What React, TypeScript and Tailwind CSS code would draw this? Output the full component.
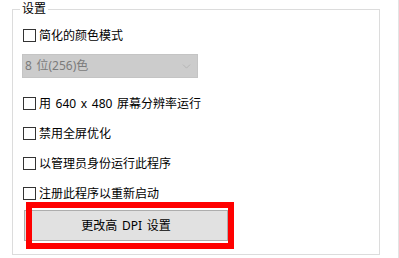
import { ChevronDown } from 'lucide-react'

const FONT = '[font-family:"Noto_Sans","Noto_Sans_CJK_SC",sans-serif]'

function CheckRow({ label }: { label: string }) {
  return (
    <div className="flex h-[13px] items-center gap-[3px]">
      <span className="block h-[13px] w-[13px] shrink-0 border border-[#333333] bg-white" />
      <span className="text-[12px] leading-none text-black [word-spacing:1.5px]">{label}</span>
    </div>
  )
}

export default function App() {
  return (
    <div className={`h-[258px] w-[399px] overflow-hidden bg-white ${FONT}`}>
      <div className="flex h-full border-r border-[#e3e3e3] pr-[18px] pt-[9px] pl-[12px] w-[399px]">
        <fieldset className="relative m-0 h-[246px] w-[368px] border border-[#dcdcdc] p-0">
          <span className="absolute left-[7px] top-[-9px] bg-white px-[2px] text-[12px] leading-[16px] text-black">
            设置
          </span>

          <div className="flex flex-col pl-[10px] pt-[19px]">
            <CheckRow label="简化的颜色模式" />

            <div className="ml-[-1px] mt-[12px] flex h-[24px] w-[176px] items-center justify-between border border-[#c4c4c4] bg-[#cccccc] pl-[2px] pr-[4px]">
              <span className="text-[12px] leading-none text-[#7b7b7b] [word-spacing:1.5px]">8 位(256)色</span>
              <ChevronDown size={13} strokeWidth={1.2} className="text-[#a8a8a8]" />
            </div>

            <div className="mt-[19px] flex flex-col gap-[17px]">
              <CheckRow label="用 640 x 480 屏幕分辨率运行" />
              <CheckRow label="禁用全屏优化" />
              <CheckRow label="以管理员身份运行此程序" />
              <CheckRow label="注册此程序以重新启动" />
            </div>

            <div className="relative ml-[1px] mt-[10px] w-[204px]">
              <button className="flex h-[31px] w-[204px] items-center justify-center border border-[#adadad] bg-[#e1e1e1] text-[12px] text-black [word-spacing:1.5px]">
                更改高 DPI 设置
              </button>
              <span className="pointer-events-none absolute left-[2px] top-[-8px] h-[47px] w-[208px] border-[6px] border-[#ff0000]" />
            </div>
          </div>
        </fieldset>
      </div>
    </div>
  )
}
